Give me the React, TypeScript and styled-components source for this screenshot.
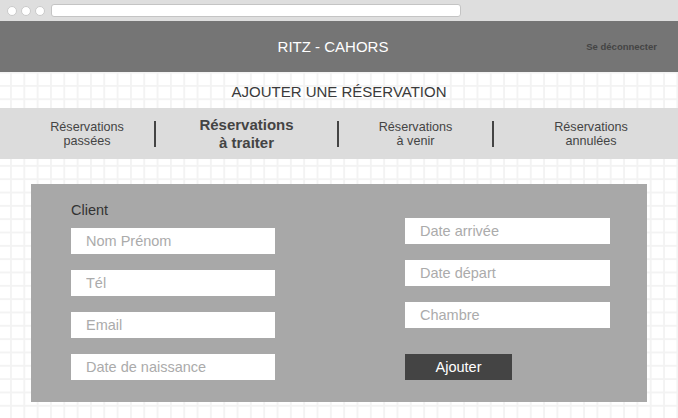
import React from 'react';
import styled, { createGlobalStyle } from 'styled-components';

const GlobalStyle = createGlobalStyle`
  html, body { margin: 0; padding: 0; height: 100%; }
  body { font-family: "Liberation Sans", Arial, sans-serif; background: #fff; }
  #root { height: 100%; }
  * { box-sizing: border-box; }
`;

const Page = styled.div`
  display: flex;
  flex-direction: column;
  min-height: 100vh;
`;

const Chrome = styled.div`
  height: 21px;
  background: #dedede;
  display: flex;
  align-items: center;
  padding-left: 7px;
  gap: 4px;
`;

const Dot = styled.span`
  width: 10px;
  height: 10px;
  border-radius: 50%;
  background: #fff;
  border: 1px solid #cacaca;
`;

const Address = styled.div`
  margin-left: 2px;
  width: 410px;
  height: 13px;
  background: #fff;
  border: 1px solid #c4c4c4;
  border-radius: 3px;
`;

const Header = styled.header`
  height: 51px;
  background: #757575;
  display: grid;
  grid-template-columns: 1fr auto 1fr;
  align-items: center;
`;

const Brand = styled.div`
  grid-column: 2;
  color: #fff;
  font-size: 15px;
  margin-right: 12px;
`;

const Logout = styled.a`
  grid-column: 3;
  justify-self: end;
  padding-right: 21px;
  font-size: 9.5px;
  font-weight: bold;
  color: #444;
  text-decoration: none;
`;

const Main = styled.main`
  flex: 1;
  background-color: #fff;
  background-image:
    linear-gradient(to right, #f3f3f3 2px, transparent 2px),
    linear-gradient(to bottom, #f3f3f3 2px, transparent 2px);
  background-size: 13.333px 13.333px;
  background-position: 10px -0.4px;
`;

const PageTitle = styled.h1`
  margin: 0;
  height: 36px;
  padding-top: 4px;
  line-height: 32px;
  text-align: center;
  font-size: 15px;
  font-weight: normal;
  color: #3a3a3a;
`;

const Tabs = styled.nav`
  height: 51px;
  background: #dcdcdc;
  display: grid;
  grid-template-columns: 154px 2px 181px 2px 153px 2px 1fr;
  align-items: center;
`;

const Tab = styled.div<{ $active?: boolean; $shift?: number }>`
  text-align: center;
  color: #444;
  padding-left: ${p => p.$shift ?? 0}px;
  font-size: ${p => (p.$active ? '15px' : '12.6px')};
  font-weight: ${p => (p.$active ? 'bold' : 'normal')};
  line-height: ${p => (p.$active ? '17.5px' : '14px')};
`;

const Sep = styled.span`
  width: 2px;
  height: 26px;
  background: #444;
`;

const Panel = styled.section`
  margin: 25px 0 0 31px;
  width: 616px;
  height: 218px;
  background: #a8a8a8;
  display: grid;
  grid-template-columns: 204px 205px;
  column-gap: 130px;
  padding: 18px 0 0 40px;
  align-items: start;
`;

const Column = styled.div<{ $offset?: number }>`
  display: flex;
  flex-direction: column;
  gap: 16px;
  padding-top: ${p => p.$offset ?? 0}px;
`;

const Label = styled.div`
  font-size: 14.5px;
  line-height: 16px;
  color: #333;
  margin-bottom: -6px;
`;

const Field = styled.input`
  height: 26px;
  width: 100%;
  border: none;
  outline: none;
  padding: 0 15px;
  background: #fff;
  font-family: "Liberation Sans", Arial, sans-serif;
  font-size: 14.5px;
  color: #333;
  &::placeholder { color: #ababab; }
`;

const Button = styled.button`
  margin-top: 10px;
  width: 107px;
  height: 26px;
  border: none;
  background: #444;
  color: #fff;
  font-family: "Liberation Sans", Arial, sans-serif;
  font-size: 14.5px;
  padding: 0;
`;

export default function App() {
  return (
    <>
      <GlobalStyle />
      <Page>
        <Chrome>
          <Dot />
          <Dot />
          <Dot />
          <Address />
        </Chrome>
        <Header>
          <Brand>RITZ - CAHORS</Brand>
          <Logout href="#">Se déconnecter</Logout>
        </Header>
        <Main>
          <PageTitle>AJOUTER UNE RÉSERVATION</PageTitle>
          <Tabs>
            <Tab $shift={20}>Réservations<br />passées</Tab>
            <Sep />
            <Tab $active>Réservations<br />à traiter</Tab>
            <Sep />
            <Tab>Réservations<br />à venir</Tab>
            <Sep />
            <Tab $shift={10}>Réservations<br />annulées</Tab>
          </Tabs>
          <Panel>
            <Column>
              <Label>Client</Label>
              <Field placeholder="Nom Prénom" />
              <Field placeholder="Tél" />
              <Field placeholder="Email" />
              <Field placeholder="Date de naissance" />
            </Column>
            <Column $offset={16}>
              <Field placeholder="Date arrivée" />
              <Field placeholder="Date départ" />
              <Field placeholder="Chambre" />
              <Button type="button">Ajouter</Button>
            </Column>
          </Panel>
        </Main>
      </Page>
    </>
  );
}
